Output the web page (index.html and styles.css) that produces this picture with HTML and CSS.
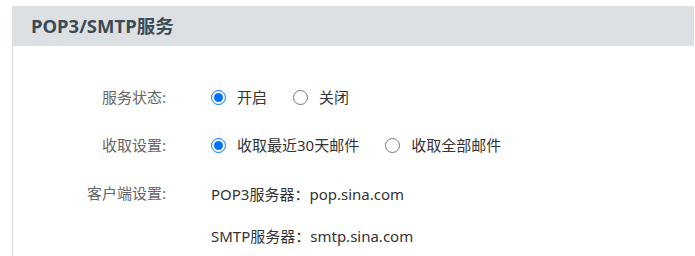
FILE: index.html
```html
<!DOCTYPE html>
<html lang="zh-CN">
<head>
<meta charset="utf-8">
<title>POP3/SMTP服务</title>
<link rel="stylesheet" href="styles.css">
</head>
<body>
<section class="panel">
  <header class="panel-head">
    <h2 class="panel-title">POP3/SMTP服务</h2>
  </header>
  <div class="panel-body">
    <div class="row">
      <div class="label">服务状态:</div>
      <div class="value">
        <label class="opt"><input type="radio" name="status" checked><span>开启</span></label>
        <label class="opt"><input type="radio" name="status"><span>关闭</span></label>
      </div>
    </div>
    <div class="row">
      <div class="label">收取设置:</div>
      <div class="value">
        <label class="opt"><input type="radio" name="fetch" checked><span>收取最近30天邮件</span></label>
        <label class="opt"><input type="radio" name="fetch"><span>收取全部邮件</span></label>
      </div>
    </div>
    <div class="row row-client">
      <div class="label">客户端设置:</div>
      <div class="value value-list">
        <div class="line">POP3服务器：pop.sina.com</div>
        <div class="line">SMTP服务器：smtp.sina.com</div>
      </div>
    </div>
  </div>
</section>
</body>
</html>
```

FILE: styles.css
```css
html, body {
  margin: 0;
  padding: 0;
  background: #fff;
}
body {
  font-family: "Noto Sans", "Noto Sans CJK SC", sans-serif;
  font-size: 15px;
  color: #333;
}
.panel {
  margin: 6px 1px 0 12px;
  border-left: 1px solid #dcdcdc;
  height: 250px;
}
.panel-head {
  background: #dde0e3;
  height: 40px;
  display: flex;
  align-items: center;
  padding-left: 19px;
  margin-left: -1px;
}
.panel-title {
  margin: 0;
  font-size: 18.5px;
  font-weight: 700;
  color: #3b4b56;
  line-height: 24px;
}
.panel-body {
  padding-top: 41px;
}
.row {
  display: flex;
  margin-bottom: 28px;
}
.label {
  width: 153px;
  text-align: right;
  color: #666;
  line-height: 20px;
  flex: none;
}
.value {
  margin-left: 45px;
  display: flex;
  align-items: center;
  line-height: 20px;
}
.opt {
  display: inline-flex;
  align-items: center;
  margin-right: 26px;
  cursor: pointer;
}
.opt input {
  width: 15px;
  height: 15px;
  margin: 0 11px 0 0;
}
.value-list {
  flex-direction: column;
  align-items: flex-start;
  gap: 22px;
  padding-top: 1px;
}
.line {
  line-height: 20px;
}
```
